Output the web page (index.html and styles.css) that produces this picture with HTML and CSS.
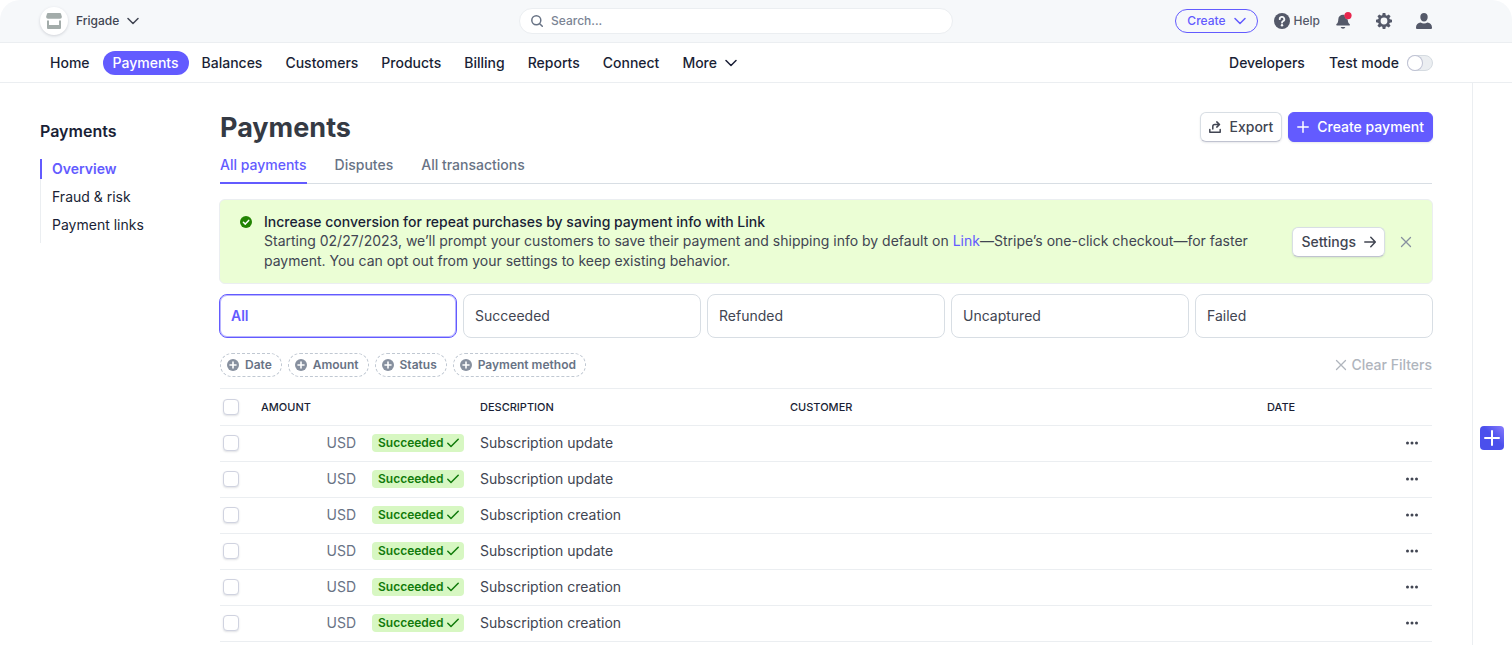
FILE: index.html
```html
<!DOCTYPE html>
<html lang="en">
<head>
<meta charset="utf-8">
<title>Payments</title>
<meta name="viewport" content="width=device-width, initial-scale=1">
<link rel="stylesheet" href="styles.css">
</head>
<body>
<svg class="sprite" aria-hidden="true">
  <symbol id="chevron" viewBox="0 0 12 12"><path d="M1 3.500 6 8.500l5-5" fill="none" stroke="currentColor" stroke-width="1.500" stroke-linecap="round" stroke-linejoin="round"/></symbol>
  <symbol id="plus-circle" viewBox="0 0 12 12"><circle cx="6" cy="6" r="6" fill="currentColor"/><path d="M6 3v6M3 6h6" stroke="#fff" stroke-width="1.600" stroke-linecap="round"/></symbol>
  <symbol id="check" viewBox="0 0 12 12"><path d="M.8 6.300 4 9.500l7.200-7.200" fill="none" stroke="currentColor" stroke-width="1.500" stroke-linecap="round" stroke-linejoin="round"/></symbol>
  <symbol id="cross" viewBox="0 0 12 12"><path d="m1.500 1.500 9 9m0-9-9 9" fill="none" stroke="currentColor" stroke-width="1.300" stroke-linecap="round"/></symbol>
  <symbol id="dots" viewBox="0 0 12 4"><circle cx="1.500" cy="2" r="1.500" fill="currentColor"/><circle cx="6" cy="2" r="1.500" fill="currentColor"/><circle cx="10.500" cy="2" r="1.500" fill="currentColor"/></symbol>
</svg>

<header class="topbar">
  <button class="account" type="button">
    <span class="account-logo"><svg width="16" height="16" viewBox="0 0 16 16" fill="#a3acaa"><path d="M2 0h12a1 1 0 0 1 1 .8l.8 2.700A2 2 0 0 1 14 5.800H2A2 2 0 0 1 .2 3.500L1 .8A1 1 0 0 1 2 0Z"/><path d="M1 7.500h2V12h10V7.500h2V15a1 1 0 0 1-1 1H2a1 1 0 0 1-1-1Z"/></svg></span>
    <span>Frigade</span>
    <svg class="icon-12"><use href="#chevron"/></svg>
  </button>
  <label class="search">
    <svg width="12" height="12" viewBox="0 0 12 12" fill="none" stroke="#687385" stroke-width="1.500" stroke-linecap="round"><circle cx="5.300" cy="5.300" r="4.500"/><path d="m8.700 8.700 2.600 2.600"/></svg>
    <input type="search" placeholder="Search..." aria-label="Search">
  </label>
  <div class="tools">
    <button class="create" type="button">Create <svg class="icon-12"><use href="#chevron"/></svg></button>
    <button class="tool help" type="button"><svg width="16" height="16" viewBox="0 0 16 16"><circle cx="8" cy="8" r="8" fill="currentColor"/><path d="M5.700 6.200a2.300 2.300 0 1 1 3.500 1.900C8.300 8.700 8 9 8 9.700" fill="none" stroke="#f6f8fa" stroke-width="1.800" stroke-linecap="round"/><circle cx="8" cy="12.200" r="1.200" fill="#f6f8fa"/></svg>Help</button>
    <button class="tool" type="button" aria-label="Notifications"><svg width="16" height="18" viewBox="0 0 16 18"><path d="M7 2.800c.6 0 1.200.1 1.700.4A4.500 4.500 0 0 0 11.800 7.500c0 2 .4 3.500 1.900 4.700.4.300.2 1.300-.4 1.300H.9c-.7 0-.9-1-.4-1.400C2 11 2.200 9.600 2.300 7.300 2.400 4.500 4.500 2.800 7 2.800Z" fill="currentColor"/><path d="M4.600 15h4.800a2.500 2.500 0 0 1-4.800 0Z" fill="currentColor"/><circle cx="12" cy="3.600" r="3.600" fill="#e8264d"/></svg></button>
    <button class="tool" type="button" aria-label="Settings"><svg width="16" height="16" viewBox="-8 -8 16 16"><circle r="4.700" fill="none" stroke="currentColor" stroke-width="2.600"/><g fill="currentColor"><path id="tooth" d="M-1.300-8h2.600l.6 3h-3.800Z"/><use href="#tooth" transform="rotate(45)"/><use href="#tooth" transform="rotate(90)"/><use href="#tooth" transform="rotate(135)"/><use href="#tooth" transform="rotate(180)"/><use href="#tooth" transform="rotate(225)"/><use href="#tooth" transform="rotate(270)"/><use href="#tooth" transform="rotate(315)"/></g></svg></button>
    <button class="tool" type="button" aria-label="Profile"><svg width="16" height="16" viewBox="0 0 16 16" fill="currentColor"><path d="M8 0c2.200 0 3.700 1.600 3.700 4S10.200 8.600 8 8.600 4.300 6.400 4.300 4 5.800 0 8 0Z"/><path d="M0 14.500C0 11.700 2 9.800 4.600 9.600 6.500 10.800 9.500 10.800 11.400 9.600 14 9.800 16 11.700 16 14.500V15a1 1 0 0 1-1 1H1a1 1 0 0 1-1-1Z"/></svg></button>
  </div>
</header>

<nav class="mainnav" aria-label="Main">
  <div class="nav-group">
    <a href="#">Home</a>
    <a href="#" class="current">Payments</a>
    <a href="#">Balances</a>
    <a href="#">Customers</a>
    <a href="#">Products</a>
    <a href="#">Billing</a>
    <a href="#">Reports</a>
    <a href="#">Connect</a>
    <a href="#" class="more">More <svg class="icon-12"><use href="#chevron"/></svg></a>
  </div>
  <div class="nav-side">
    <a href="#">Developers</a>
    <label class="testmode">Test mode <input type="checkbox" role="switch"></label>
  </div>
</nav>

<div class="body">
  <aside class="sidebar">
    <h2>Payments</h2>
    <ul>
      <li><a href="#" class="active">Overview</a></li>
      <li><a href="#">Fraud &amp; risk</a></li>
      <li><a href="#">Payment links</a></li>
    </ul>
  </aside>

  <main>
    <div class="title-row">
      <h1>Payments</h1>
      <div class="actions">
        <button class="btn" type="button"><svg width="12" height="12" viewBox="0 0 12 12" fill="none" stroke="currentColor" stroke-width="1.500" stroke-linecap="round" stroke-linejoin="round"><path d="M.8 8.500v2.700h10.400V8.500M3.800 8V5.500a2 2 0 0 1 2-2H10M7.800.9l2.700 2.600-2.700 2.600"/></svg>Export</button>
        <button class="btn primary" type="button"><svg width="12" height="12" viewBox="0 0 12 12" stroke="currentColor" stroke-width="1.500" stroke-linecap="round"><path d="M6 .8v10.400M.8 6h10.400"/></svg>Create payment</button>
      </div>
    </div>

    <nav class="tabs" aria-label="Payments views">
      <a href="#" class="active">All payments</a>
      <a href="#">Disputes</a>
      <a href="#">All transactions</a>
    </nav>

    <section class="banner">
      <svg class="banner-icon" width="12" height="12" viewBox="0 0 12 12"><circle cx="6" cy="6" r="6" fill="#228403"/><path d="m3.400 6.200 1.900 1.900 3.400-3.700" fill="none" stroke="#fff" stroke-width="1.500" stroke-linecap="round" stroke-linejoin="round"/></svg>
      <div class="banner-text">
        <h3>Increase conversion for repeat purchases by saving payment info with Link</h3>
        <p>Starting 02/27/2023, we’ll prompt your customers to save their payment and shipping info by default on <a href="#">Link</a>—Stripe’s one-click checkout—for faster payment. You can opt out from your settings to keep existing behavior.</p>
      </div>
      <button class="btn" type="button">Settings <svg width="12" height="12" viewBox="0 0 12 12" fill="none" stroke="currentColor" stroke-width="1.500" stroke-linecap="round" stroke-linejoin="round"><path d="M.8 6h10.400M6.800 1.300 11.300 6l-4.500 4.700"/></svg></button>
      <button class="close" type="button" aria-label="Dismiss"><svg class="icon-12"><use href="#cross"/></svg></button>
    </section>

    <div class="states">
      <button type="button" class="selected">All</button>
      <button type="button">Succeeded</button>
      <button type="button">Refunded</button>
      <button type="button">Uncaptured</button>
      <button type="button">Failed</button>
    </div>

    <div class="filters">
      <button class="chip" type="button"><svg class="icon-12"><use href="#plus-circle"/></svg>Date</button>
      <button class="chip" type="button"><svg class="icon-12"><use href="#plus-circle"/></svg>Amount</button>
      <button class="chip" type="button"><svg class="icon-12"><use href="#plus-circle"/></svg>Status</button>
      <button class="chip" type="button"><svg class="icon-12"><use href="#plus-circle"/></svg>Payment method</button>
      <button class="clear" type="button"><svg class="icon-12"><use href="#cross"/></svg>Clear Filters</button>
    </div>

    <table>
      <thead>
        <tr>
          <th class="c-check"><input type="checkbox" aria-label="Select all"></th>
          <th class="c-amount">Amount</th>
          <th class="c-status"></th>
          <th class="c-desc">Description</th>
          <th>Customer</th>
          <th class="c-date">Date</th>
          <th class="c-menu"></th>
        </tr>
      </thead>
      <tbody>
        <tr><td><input type="checkbox" aria-label="Select payment 1"></td><td class="currency">USD</td><td><span class="badge">Succeeded <svg class="icon-12"><use href="#check"/></svg></span></td><td>Subscription update</td><td></td><td></td><td class="menu"><button type="button" aria-label="More actions"><svg width="12" height="4"><use href="#dots"/></svg></button></td></tr>
        <tr><td><input type="checkbox" aria-label="Select payment 2"></td><td class="currency">USD</td><td><span class="badge">Succeeded <svg class="icon-12"><use href="#check"/></svg></span></td><td>Subscription update</td><td></td><td></td><td class="menu"><button type="button" aria-label="More actions"><svg width="12" height="4"><use href="#dots"/></svg></button></td></tr>
        <tr><td><input type="checkbox" aria-label="Select payment 3"></td><td class="currency">USD</td><td><span class="badge">Succeeded <svg class="icon-12"><use href="#check"/></svg></span></td><td>Subscription creation</td><td></td><td></td><td class="menu"><button type="button" aria-label="More actions"><svg width="12" height="4"><use href="#dots"/></svg></button></td></tr>
        <tr><td><input type="checkbox" aria-label="Select payment 4"></td><td class="currency">USD</td><td><span class="badge">Succeeded <svg class="icon-12"><use href="#check"/></svg></span></td><td>Subscription update</td><td></td><td></td><td class="menu"><button type="button" aria-label="More actions"><svg width="12" height="4"><use href="#dots"/></svg></button></td></tr>
        <tr><td><input type="checkbox" aria-label="Select payment 5"></td><td class="currency">USD</td><td><span class="badge">Succeeded <svg class="icon-12"><use href="#check"/></svg></span></td><td>Subscription creation</td><td></td><td></td><td class="menu"><button type="button" aria-label="More actions"><svg width="12" height="4"><use href="#dots"/></svg></button></td></tr>
        <tr><td><input type="checkbox" aria-label="Select payment 6"></td><td class="currency">USD</td><td><span class="badge">Succeeded <svg class="icon-12"><use href="#check"/></svg></span></td><td>Subscription creation</td><td></td><td></td><td class="menu"><button type="button" aria-label="More actions"><svg width="12" height="4"><use href="#dots"/></svg></button></td></tr>
      </tbody>
    </table>
  </main>

  <aside class="rail">
    <button type="button" aria-label="Add app"><svg width="16" height="16" viewBox="0 0 16 16" stroke="currentColor" stroke-width="2" stroke-linecap="round"><path d="M8 1v14M1 8h14"/></svg></button>
  </aside>
</div>
</body>
</html>
```

FILE: styles.css
```css
* { box-sizing: border-box; }

:root {
  --accent: #635bff;
  --ink: #1a1f36;
  --text: #414552;
  --muted: #687385;
  --line: #ebeef1;
}

body {
  margin: 0;
  min-height: 100vh;
  display: flex;
  flex-direction: column;
  font-family: Inter, "Liberation Sans", sans-serif;
  font-size: 14px;
  line-height: 20px;
  color: var(--text);
  background: #fff;
}

button {
  font: inherit;
  color: inherit;
  background: none;
  border: 0;
  padding: 0;
  cursor: pointer;
}

a { color: inherit; text-decoration: none; }
h1, h2, h3, p, ul { margin: 0; padding: 0; }
ul { list-style: none; }
svg { display: block; flex: none; }
.sprite { display: none; }
.icon-12 { width: 12px; height: 12px; }

/* Top bar */
.topbar {
  display: grid;
  grid-template-columns: 1fr minmax(0, 434px) 1fr;
  align-items: center;
  height: 43px;
  padding: 0 80px 0 40px;
  background: #f6f8fa;
  border-bottom: 1px solid var(--line);
  border-radius: 20px 20px 0 0;
  font-size: 12px;
  font-weight: 500;
}

.account {
  justify-self: start;
  display: flex;
  align-items: center;
  gap: 8px;
}

.account-logo {
  display: grid;
  place-items: center;
  width: 28px;
  height: 28px;
  border-radius: 50%;
  background: #fff;
  box-shadow: 0 1px 3px rgba(60, 66, 87, 0.2);
}

.search {
  display: flex;
  align-items: center;
  gap: 8px;
  height: 26px;
  padding: 0 11px;
  background: #fff;
  border: 1px solid var(--line);
  border-radius: 13px;
}

.search input {
  flex: 1;
  min-width: 0;
  border: 0;
  padding: 0;
  background: none;
  font: inherit;
  outline: none;
}

.search input::placeholder { color: #7b8494; }

.tools {
  justify-self: end;
  display: flex;
  align-items: center;
  gap: 24px;
  color: #545969;
}

.create {
  display: flex;
  align-items: center;
  gap: 8px;
  height: 24px;
  padding: 0 11px;
  margin-right: -8px;
  border: 1px solid var(--accent);
  border-radius: 12px;
  color: var(--accent);
}

.help {
  display: flex;
  align-items: center;
  gap: 4px;
  margin-right: -8px;
}

/* Main navigation */
.mainnav {
  display: flex;
  justify-content: space-between;
  align-items: center;
  height: 40px;
  padding: 0 79px 0 40px;
  border-bottom: 1px solid var(--line);
  font-weight: 500;
  color: var(--ink);
}

.nav-group { display: flex; gap: 3px; }

.nav-group a {
  height: 24px;
  padding: 2px 10px;
  border-radius: 12px;
}

.nav-group .current { background: var(--accent); color: #fff; }
.nav-group .more { display: flex; align-items: center; gap: 8px; }
.nav-side { display: flex; align-items: center; gap: 24px; }
.testmode { display: flex; align-items: center; gap: 8px; }

.testmode input {
  appearance: none;
  display: flex;
  width: 26px;
  height: 16px;
  margin: 0;
  border: 1px solid #d5dbe1;
  border-radius: 8px;
  background: var(--line);
}

.testmode input::before {
  content: "";
  width: 14px;
  height: 14px;
  border-radius: 50%;
  background: #fff;
  box-shadow: 0 0 0 1px #c0c3d4;
}

/* Page body */
.body { flex: 1; display: flex; }

.sidebar { flex: none; width: 180px; margin-left: 40px; padding-top: 38px; color: var(--ink); }

.sidebar h2 {
  margin-bottom: 18px;
  font-size: 16px;
  line-height: 20px;
  font-weight: 600;
}

.sidebar ul {
  display: grid;
  gap: 8px;
  padding-bottom: 8px;
  border-left: 1px solid var(--line);
}

.sidebar a { display: block; padding-left: 11px; }

.sidebar .active {
  margin-left: -1px;
  padding-left: 10px;
  border-left: 2px solid var(--accent);
  color: var(--accent);
  font-weight: 600;
}

main { flex: 1; min-width: 0; padding: 29px 40px 0 0; }

.title-row {
  display: flex;
  justify-content: space-between;
  align-items: center;
  margin-right: -1px;
}

h1 { padding-top: 2px; font-size: 27px; line-height: 28px; font-weight: 700; color: #353a44; }

.actions { display: flex; gap: 6px; }

.btn {
  display: flex;
  flex: none;
  align-items: center;
  gap: 8px;
  height: 30px;
  padding: 0 8px;
  border: 1px solid #d8dee4;
  border-bottom-color: #c0c3d0;
  border-radius: 6px;
  background: #fff;
  box-shadow: 0 1px 2px rgba(60, 66, 87, 0.12);
  font-weight: 500;
}

.primary {
  background: var(--accent);
  border-color: var(--accent);
  color: #fff;
}

.tabs {
  display: flex;
  gap: 28px;
  margin-top: 5px;
  border-bottom: 1px solid #d8dee4;
  font-weight: 500;
  color: var(--muted);
}

.tabs a {
  padding: 8px 0 7px;
  margin-bottom: -1px;
  border-bottom: 2px solid transparent;
}

.tabs .active { color: var(--accent); border-color: var(--accent); }

.banner {
  display: flex;
  align-items: center;
  margin: 15px -1px 10px;
  padding: 12px 20px;
  background: #ebfed5;
  border: 1px solid var(--line);
  border-radius: 6px;
}

.banner-icon { align-self: flex-start; margin: 4px 12px 0 0; }
.banner-text { flex: 1; margin-right: 24px; }
.banner h3 { font-size: 14px; line-height: 19px; font-weight: 500; color: var(--ink); }
.banner p a { color: var(--accent); }
.close { margin-left: 15px; color: #87909f; }

.states {
  display: grid;
  grid-template-columns: repeat(5, 1fr);
  gap: 6px;
  margin: 0 -1px;
}

.states button {
  height: 44px;
  padding: 0 11px;
  border: 1px solid #d8dee4;
  border-radius: 8px;
  text-align: left;
}

.states .selected {
  border-color: var(--accent);
  box-shadow: inset 0 0 0 1px rgba(99, 91, 255, 0.45);
  color: var(--accent);
  font-weight: 600;
}

.filters {
  display: flex;
  align-items: center;
  gap: 6px;
  margin: 15px 0 11px;
  color: var(--muted);
}

.chip {
  display: flex;
  align-items: center;
  gap: 6px;
  height: 24px;
  padding: 0 9px 0 6px;
  border: 1px dashed #c0c8d2;
  border-radius: 12px;
  font-size: 12px;
  font-weight: 600;
}

.chip svg { color: #87909f; }

.clear {
  display: flex;
  align-items: center;
  gap: 4px;
  margin-left: auto;
  color: #b0b5bd;
  font-weight: 500;
}

/* Payments table */
table {
  width: 100%;
  table-layout: fixed;
  border-collapse: separate;
  border-spacing: 0;
}

th, td {
  padding: 0 8px;
  border-bottom: 1px solid var(--line);
  text-align: left;
}

th {
  height: 38px;
  border-top: 1px solid var(--line);
  font-size: 11px;
  font-weight: 500;
  text-transform: uppercase;
  color: var(--ink);
}

td { height: 36px; padding-bottom: 1px; }
th:first-child, td:first-child { padding-left: 3px; padding-right: 3px; }
.c-check { width: 33px; }
.c-amount { width: 111px; }
.c-status { width: 108px; }
.c-desc { width: 310px; }
.c-date { width: 133px; }
.c-menu { width: 40px; }
.currency { text-align: right; color: var(--muted); }

td input, th input {
  appearance: none;
  display: block;
  width: 16px;
  height: 16px;
  margin: 0;
  border: 1px solid #d0d3e0;
  border-radius: 4px;
  background: #fff;
  box-shadow: 0 1px 2px rgba(60, 66, 87, 0.16);
}

.badge {
  display: flex;
  align-items: center;
  gap: 4px;
  width: fit-content;
  height: 18px;
  padding: 0 5px 0 6px;
  border-radius: 4px;
  background: #d7f7c2;
  color: #117a0b;
  font-size: 12px;
  font-weight: 600;
}

.menu button { display: grid; place-items: center; width: 24px; height: 20px; }

/* App rail */
.rail {
  flex: none;
  display: grid;
  place-items: center;
  width: 40px;
  padding: 0 1px 2px 0;
  border-left: 1px solid var(--line);
}

.rail button {
  display: grid;
  place-items: center;
  width: 24px;
  height: 24px;
  margin-top: 150px;
  border-radius: 4px;
  background: linear-gradient(45deg, #4b50ec 55%, #8a7dff);
  color: #fff;
}
```
